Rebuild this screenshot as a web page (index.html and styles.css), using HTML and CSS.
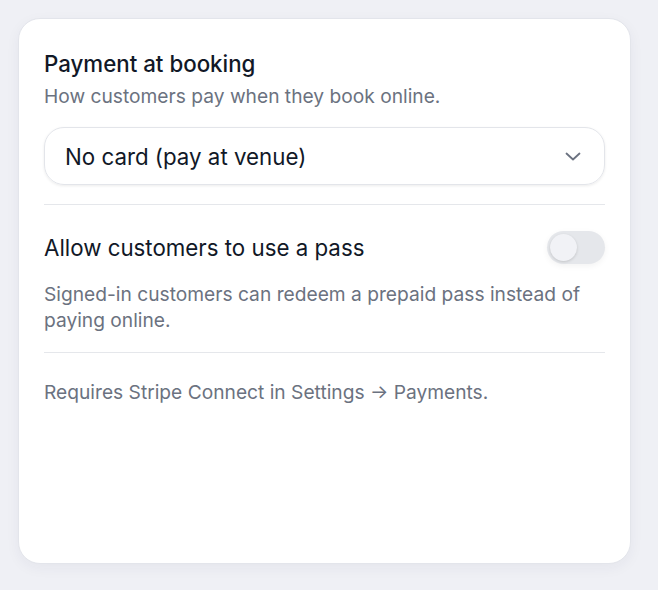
FILE: index.html
```html
<!DOCTYPE html>
<html lang="en">
<head>
<meta charset="utf-8">
<link rel="stylesheet" href="styles.css">
</head>
<body>
<div class="card">
  <div class="title">Payment at booking</div>
  <div class="subtitle">How customers pay when they book online.</div>
  <div class="select">
    <span class="select-value">No card (pay at venue)</span>
    <svg class="chevron" width="20" height="20" viewBox="0 0 20 20" fill="none"><path d="M3.5 7.5l6.5 6 6.5-6" stroke="#6b7280" stroke-width="1.8" stroke-linecap="round" stroke-linejoin="round"/></svg>
  </div>
  <div class="divider first"></div>
  <div class="row">
    <span class="row-label">Allow customers to use a pass</span>
    <span class="toggle"><span class="knob"></span></span>
  </div>
  <div class="desc">Signed-in customers can redeem a prepaid pass instead of paying online.</div>
  <div class="divider second"></div>
  <div class="note">Requires Stripe Connect in Settings → Payments.</div>
</div>
</body>
</html>
```
FILE: styles.css
```css
* { box-sizing: border-box; }
html, body { margin: 0; }
body {
  background: #eff0f5;
  padding: 18px;
  font-family: Inter, "Noto Sans", sans-serif;
  height: 590px;
}
.card {
  width: 613px;
  height: 546px;
  background: #fff;
  border: 1px solid #e3e5eb;
  border-radius: 22px;
  padding: 31px 25px 0 25px;
  box-shadow: 0 4px 14px rgba(30, 40, 80, 0.05);
}
.title {
  font-size: 22.3px;
  line-height: 28px;
  font-weight: 500;
  color: #111827;
}
.subtitle {
  margin-top: 6px;
  font-size: 19.2px;
  line-height: 24px;
  color: #6b7280;
}
.select {
  margin-top: 19px;
  height: 58px;
  border: 1px solid #e3e5ea;
  border-radius: 20px;
  display: flex;
  align-items: center;
  justify-content: space-between;
  padding: 0 21px 0 20px;
  box-shadow: 0 1px 3px rgba(0, 0, 0, 0.08);
}
.select-value {
  font-size: 22.3px;
  color: #111827;
}
.divider {
  height: 1px;
  background: #e5e7eb;
}
.divider.first { margin-top: 19px; }
.divider.second { margin-top: 19px; }
.row {
  margin-top: 26px;
  height: 33px;
  display: flex;
  align-items: center;
  justify-content: space-between;
}
.row-label {
  font-size: 22.3px;
  color: #111827;
}
.toggle {
  width: 58px;
  height: 33px;
  border-radius: 17px;
  background: #e5e7eb;
  display: flex;
  align-items: center;
  padding-left: 3px;
  box-shadow: 0 2px 6px rgba(0, 0, 0, 0.05);
}
.knob {
  width: 27px;
  height: 27px;
  border-radius: 50%;
  background: #f1f2f6;
  box-shadow: 0 1px 3px rgba(0, 0, 0, 0.15);
}
.desc {
  margin-top: 17px;
  font-size: 19.2px;
  line-height: 26px;
  color: #6b7280;
}
.note {
  margin-top: 27px;
  font-size: 19.2px;
  line-height: 24px;
  color: #6b7280;
}
```
